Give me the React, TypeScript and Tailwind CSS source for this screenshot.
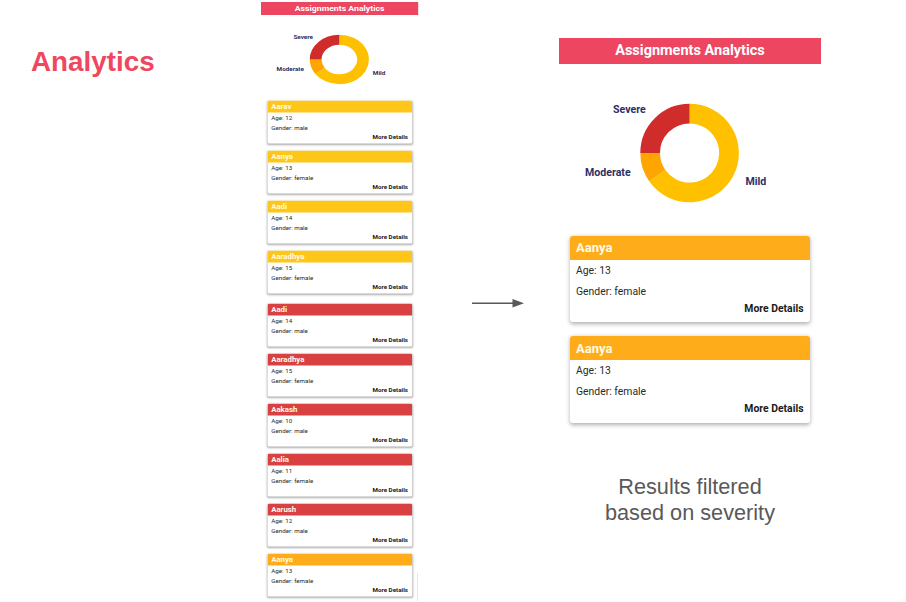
type Severity = "mild" | "severe" | "moderate";
type Patient = { name: string; age: number; gender: string };

const headerColor: Record<Severity, string> = {
  mild: "bg-[#ffc61a]",
  severe: "bg-[#d84042]",
  moderate: "bg-[#ffac1a]",
};

const groups: { severity: Severity; patients: Patient[] }[] = [
  {
    severity: "mild",
    patients: [
      { name: "Aarav", age: 12, gender: "male" },
      { name: "Aanya", age: 13, gender: "female" },
      { name: "Aadi", age: 14, gender: "male" },
      { name: "Aaradhya", age: 15, gender: "female" },
    ],
  },
  {
    severity: "severe",
    patients: [
      { name: "Aadi", age: 14, gender: "male" },
      { name: "Aaradhya", age: 15, gender: "female" },
      { name: "Aakash", age: 10, gender: "male" },
      { name: "Aalia", age: 11, gender: "female" },
      { name: "Aarush", age: 12, gender: "male" },
    ],
  },
];

const filtered: Patient[] = [
  { name: "Aanya", age: 13, gender: "female" },
  { name: "Aanya", age: 13, gender: "female" },
];

function Bar() {
  return (
    <div className="flex h-[26px] items-center justify-center bg-[#ec4661] pt-px text-[14.5px] font-bold text-white">
      <span className="whitespace-nowrap">Assignments Analytics</span>
    </div>
  );
}

function Donut() {
  return (
    <svg viewBox="0 0 262 172" className="block h-[172px] w-[262px]">
      <g transform="translate(130.6 89)" fill="none" strokeWidth="19.7">
        <path d="M0 -39.45A39.45 39.45 0 1 1 -32.32 22.63" stroke="#ffc000" />
        <path d="M-32.32 22.63A39.45 39.45 0 0 1 -39.45 0" stroke="#ffa500" />
        <path d="M-39.45 0A39.45 39.45 0 0 1 0 -39.45" stroke="#d02c2c" />
      </g>
      <g className="text-[10.6px] font-bold" fill="#2b3068">
        <text x="54" y="48.9">Severe</text>
        <text x="26" y="111.9">Moderate</text>
        <text x="186.4" y="120.9">Mild</text>
      </g>
    </svg>
  );
}

function Card({ patient, severity }: { patient: Patient; severity: Severity }) {
  return (
    <div className="h-[86.5px] overflow-hidden rounded-[3px] bg-white text-[10.4px] text-[#2a2a2a] shadow-[0_1.5px_4px_rgba(0,0,0,0.32)]">
      <div className={`flex h-6 items-center px-[6.5px] pt-px text-[13px] font-bold text-[#fffbe8] ${headerColor[severity]}`}>
        {patient.name}
      </div>
      <div className="flex flex-col px-[6.5px]">
        <p className="h-[21px] leading-[21px]">Age: {patient.age}</p>
        <p className="h-5 leading-[21px]">Gender: {patient.gender}</p>
        <p className="h-4 text-right leading-4 font-bold text-[#1a1a1a]">More Details</p>
      </div>
    </div>
  );
}

export default function App() {
  return (
    <main className="flex h-[602px] w-[906px] overflow-hidden bg-white font-['Roboto',sans-serif]">
      <section className="w-[261px] shrink-0 pt-[46px] pl-[31px]">
        <h1 className="font-['Liberation_Sans',sans-serif] text-[27.8px] leading-8 font-bold text-[#f04760]">Analytics</h1>
      </section>

      <section className="relative h-[602px] w-[157px] shrink-0 pt-[1.5px]">
        <div className="w-[262px] origin-top-left scale-x-[0.6] scale-y-[0.5]">
          <Bar />
          <Donut />
          <div className="-mt-[1.5px] mr-[10.5px] ml-[10.5px] flex flex-col gap-[19.5px]">
            {groups.map((group) => (
              <div key={group.severity} className="flex flex-col gap-[13.5px]">
                {group.patients.map((patient) => (
                  <Card key={patient.name} patient={patient} severity={group.severity} />
                ))}
                {group.severity === "severe" && <Card patient={filtered[0]} severity="moderate" />}
              </div>
            ))}
          </div>
        </div>
        <div className="absolute right-0 bottom-px h-7 w-px bg-[#e6e6e6]" />
      </section>

      <section className="w-[141px] shrink-0 pt-[297px] pl-[54px]">
        <svg viewBox="0 0 53 12" className="h-3 w-[53px]">
          <path d="M0 6.2H42" stroke="#595959" strokeWidth="1.4" />
          <path d="M40.5 2L52 6.2L40.5 10.4Z" fill="#595959" />
        </svg>
      </section>

      <section className="w-[262px] shrink-0 pt-[37.5px]">
        <Bar />
        <Donut />
        <div className="mr-[11px] ml-[10.5px] flex flex-col gap-[14px]">
          {filtered.map((patient, index) => (
            <Card key={index} patient={patient} severity="moderate" />
          ))}
        </div>
        <p className="mt-[51.5px] text-center font-['Liberation_Sans',sans-serif] text-[21.7px] leading-[26px] text-[#595959]">
          Results filtered
          <br />
          based on severity
        </p>
      </section>
    </main>
  );
}
